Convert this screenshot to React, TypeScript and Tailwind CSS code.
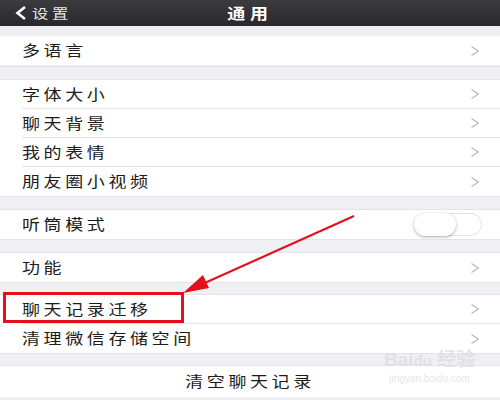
import React from "react";

const font = { fontFamily: '"Noto Sans CJK SC", "Noto Sans", sans-serif' };

const Chevron = () => (
    <svg width="10" height="12" viewBox="0 0 10 12" fill="none">
        <path d="M1.5 1.5 L8.5 6 L1.5 10.5" stroke="#b5b5ba" strokeWidth="1.1" />
    </svg>
);

const Label = ({ children }: { children: React.ReactNode }) => (
    <span className="inline-block origin-left scale-x-[1.2] text-[15px] tracking-[3px] text-[#1c1c1c]">{children}</span>
);

const Row = ({ title, last, right }: { title: string; last?: boolean; right?: React.ReactNode }) => (
    <div className="flex h-[29px] items-center bg-white pl-[22px]">
        <div className={"flex h-full flex-1 items-center justify-between pr-[20px]" + (last ? "" : " border-b border-[#e3e3e6]")}>
            <Label>{title}</Label>
            {right ?? <Chevron />}
        </div>
    </div>
);

const Gap = ({ h }: { h: string }) => <div className={h + " bg-[#efeff4] border-y border-[#e4e4e8]"} />;

export default function App() {
    return (
        <div className="relative h-[400px] w-[500px] overflow-hidden bg-[#efeff4]" style={font}>
            <div className="relative flex h-[26px] items-center bg-gradient-to-b from-[#3c3b40] to-[#29282c] px-[14px]">
                <div className="flex items-center gap-[4px] text-white">
                    <svg width="14" height="16" viewBox="0 0 14 16" fill="none">
                        <path d="M11 2 L3.5 8 L11 14" stroke="white" strokeWidth="2.6" strokeLinejoin="miter" />
                    </svg>
                    <span className="inline-block origin-left scale-x-[1.25] text-[13px] tracking-[3px] text-[#e8e8e8]">设置</span>
                </div>
                <span className="absolute left-1/2 -translate-x-1/2 scale-x-[1.2] text-[15px] font-bold tracking-[4px] text-white">通用</span>
            </div>
            <div className="h-[10px]" />
            <div className="h-[30px]">
                <Row title="多语言" last />
            </div>
            <Gap h="h-[14px]" />
            <Row title="字体大小" />
            <Row title="聊天背景" />
            <Row title="我的表情" />
            <Row title="朋友圈小视频" last />
            <Gap h="h-[14px]" />
            <Row
                title="听筒模式"
                last
                right={
                    <div className="relative -mr-[2px] h-[23px] w-[68px] rounded-full border border-[#e2e2e2] bg-white">
                        <div className="absolute -left-px -top-px h-[23px] w-[42px] rounded-full bg-white shadow-[0_1px_3px_rgba(0,0,0,0.35)]" />
                    </div>
                }
            />
            <Gap h="h-[14px]" />
            <Row title="功能" last />
            <Gap h="h-[13px]" />
            <Row title="聊天记录迁移" />
            <Row title="清理微信存储空间" last />
            <Gap h="h-[13px]" />
            <div className="flex h-[31px] items-center justify-center bg-white">
                <span className="inline-block scale-x-[1.2] text-[15px] tracking-[3px] text-[#1c1c1c]">清空聊天记录</span>
            </div>

            {/* annotation */}
            <div className="absolute left-[3px] top-[292px] h-[31px] w-[181px] border-[3px] border-[#e3101b]" />
            <svg className="absolute left-0 top-0" width="500" height="400">
                <line x1="354" y1="216" x2="198" y2="286" stroke="#e3101b" strokeWidth="2" />
                <polygon points="183,293 203,275 209,288" fill="#e3101b" />
            </svg>

            {/* watermark */}
            <div className="absolute left-[384px] top-[350px] flex flex-col items-center text-[#dcdce0] opacity-70">
                <span className="text-[19px] font-bold leading-none" style={{ fontFamily: '"Liberation Sans", "Noto Sans CJK SC", sans-serif' }}>
                    Bai<span className="text-[15px]">du</span> 经验
                </span>
                <span className="mt-[5px] text-[10px] leading-none" style={{ fontFamily: '"Liberation Sans", sans-serif' }}>jingyan.baidu.com</span>
            </div>
        </div>
    );
}
